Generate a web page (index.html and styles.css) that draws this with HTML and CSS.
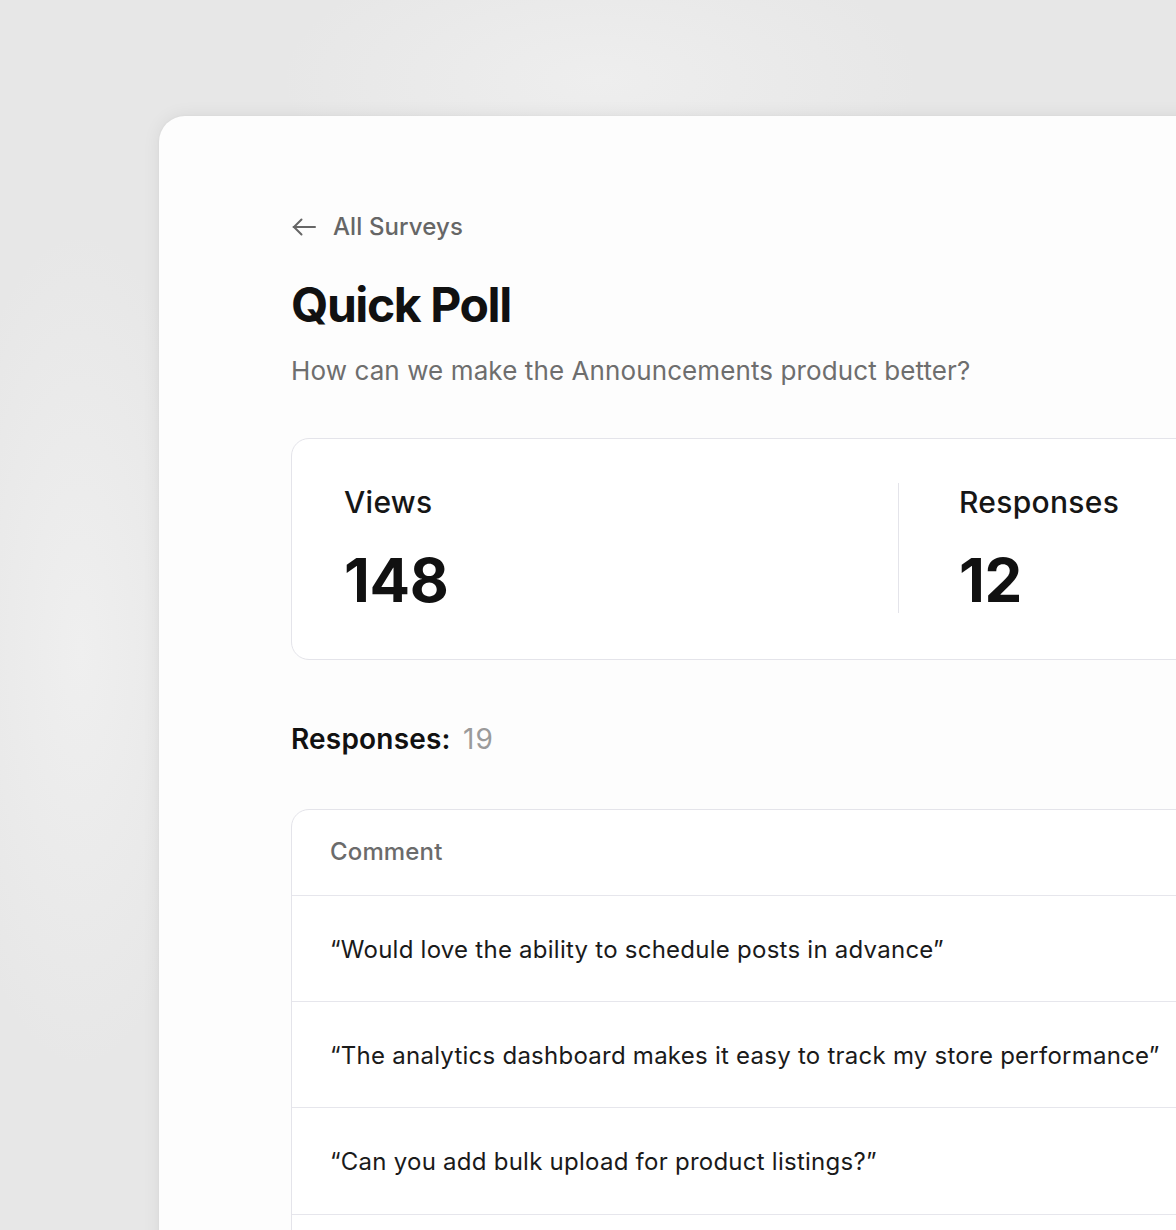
FILE: index.html
```html
<!DOCTYPE html>
<html lang="en">
<head>
<meta charset="utf-8">
<title>Quick Poll</title>
<link rel="stylesheet" href="styles.css">
</head>
<body>
<div class="stage">
  <main class="panel">
    <a class="back" href="#">
      <svg class="back-icon" width="24" height="18" viewBox="0 0 24 18" fill="none" stroke="currentColor" stroke-width="2" stroke-linecap="round" stroke-linejoin="round"><path d="M23 9H1.5"/><path d="M9.5 1.5L2 9l7.5 7.5"/></svg>
      <span>All Surveys</span>
    </a>
    <h1 class="title">Quick Poll</h1>
    <p class="subtitle">How can we make the Announcements product better?</p>

    <section class="stats">
      <div class="stat stat-first">
        <div class="stat-label">Views</div>
        <div class="stat-value">148</div>
      </div>
      <div class="stat stat-second">
        <div class="stat-label">Responses</div>
        <div class="stat-value">12</div>
      </div>
    </section>

    <h2 class="count">Responses: <span class="count-num">19</span></h2>

    <section class="table">
      <div class="table-head">Comment</div>
      <div class="table-row">“Would love the ability to schedule posts in advance”</div>
      <div class="table-row">“The analytics dashboard makes it easy to track my store performance”</div>
      <div class="table-row">“Can you add bulk upload for product listings?”</div>
      <div class="table-row table-row-empty"></div>
    </section>
  </main>
</div>
</body>
</html>
```

FILE: styles.css
```css
* { box-sizing: border-box; }
html, body {
  margin: 0;
  padding: 0;
  height: 1230px;
  overflow: hidden;
}
body {
  font-family: Inter, "Noto Sans", "Liberation Sans", sans-serif;
  background-color: #e7e7e7;
  background-image:
    radial-gradient(ellipse 320px 140px at 600px 80px, #eeeeee 0%, rgba(238,238,238,0) 100%),
    radial-gradient(ellipse 140px 420px at 80px 650px, #efefef 0%, rgba(239,239,239,0) 100%);
}
.stage {
  width: 1176px;
  height: 1230px;
  overflow: hidden;
  padding: 116px 0 0 159px;
}
.panel {
  width: 1300px;
  min-height: 1300px;
  background: #fdfdfd;
  border-top-left-radius: 26px;
  box-shadow: 0 0 18px rgba(0,0,0,0.07), 0 0 3px rgba(0,0,0,0.04);
  padding: 95px 0 0 132px;
}
.back {
  display: flex;
  align-items: center;
  gap: 17px;
  height: 32px;
  color: #666666;
  text-decoration: none;
  font-size: 24px;
  line-height: 32px;
  font-weight: 500;
  letter-spacing: 0.1px;
}
.back-icon { display: block; margin-left: 1px; }
.title {
  margin: 34px 0 0;
  font-size: 48px;
  line-height: 56px;
  font-weight: 700;
  letter-spacing: -1.4px;
  color: #111111;
}
.subtitle {
  margin: 22px 0 0;
  font-size: 26px;
  line-height: 32px;
  color: #6e6e6e;
  letter-spacing: 0.1px;
}
.stats {
  margin-top: 51px;
  display: flex;
  width: 1000px;
  background: #ffffff;
  border: 1px solid #e4e4ea;
  border-radius: 18px;
  padding: 45px 0 47px 52px;
}
.stat-first { width: 554px; }
.stat-second {
  border-left: 1.5px solid #e4e4ea;
  padding-left: 60px;
  margin: -1px 0;
  padding-top: 1px;
}
.stat-label {
  font-size: 30px;
  line-height: 36px;
  color: #161616;
  font-weight: 500;
  letter-spacing: 0.3px;
}
.stat-value {
  margin-top: 28px;
  font-size: 60px;
  line-height: 64px;
  font-weight: 700;
  color: #111111;
  letter-spacing: -0.3px;
}
.count {
  margin: 61px 0 0;
  font-size: 28px;
  line-height: 36px;
  font-weight: 600;
  color: #111111;
  letter-spacing: 0.2px;
}
.count-num {
  font-weight: 400;
  color: #9a9a9a;
  margin-left: 5px;
  letter-spacing: 1px;
}
.table {
  margin-top: 52px;
  width: 1000px;
  background: #ffffff;
  border: 1px solid #e4e4ea;
  border-radius: 18px;
}
.table-head {
  padding: 26px 38px 27px;
  font-size: 24px;
  line-height: 32px;
  color: #6b6b6b;
  font-weight: 500;
  letter-spacing: 0.15px;
}
.table-row {
  border-top: 1.5px solid #e6e6ec;
  padding: 38px 38px 35.2px;
  font-size: 24px;
  line-height: 32px;
  color: #1a1a1a;
  letter-spacing: 0.25px;
}
.table-row-empty { height: 107px; }
```
